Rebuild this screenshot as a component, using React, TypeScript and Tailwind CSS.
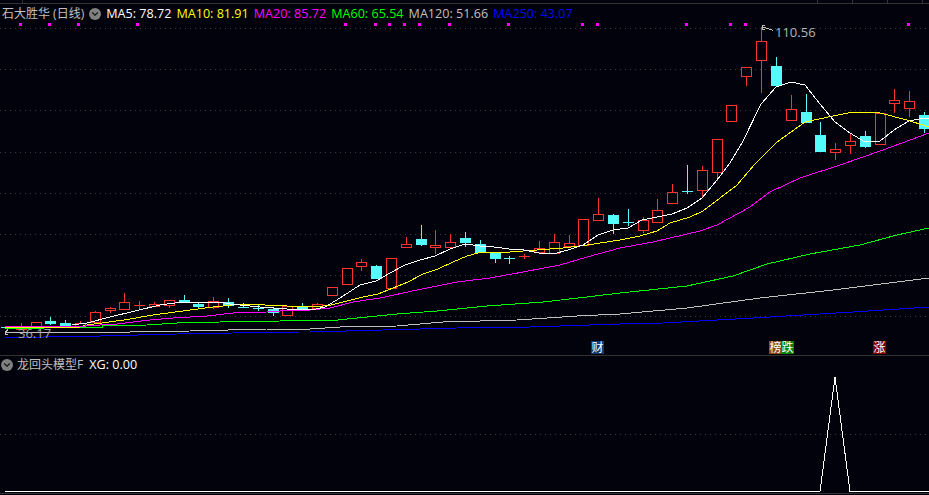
import { ChevronDown } from "lucide-react";

const FONT = "font-['Open_Sans','Noto_Sans_CJK_SC',sans-serif]";

// high, body top, body bottom, low, rising?
const CANDLES: [number, number, number, number, boolean][] = [
  [327, 327, 327, 327, false],
  [323, 326, 329, 329, true],
  [322, 322, 326, 326, true],
  [317, 321, 323, 325, false],
  [320, 323, 325, 325, false],
  [321, 323, 327, 327, true],
  [311, 312, 322, 322, true],
  [307, 308, 310, 313, true],
  [293, 302, 309, 309, true],
  [301, 305, 305, 309, true],
  [302, 304, 306, 306, true],
  [300, 300, 305, 308, true],
  [295, 300, 301, 303, false],
  [302, 304, 306, 309, false],
  [297, 301, 307, 309, true],
  [298, 302, 305, 308, false],
  [303, 307, 307, 308, false],
  [305, 308, 308, 311, false],
  [307, 309, 312, 316, false],
  [306, 306, 315, 315, true],
  [303, 307, 308, 308, false],
  [303, 304, 308, 308, true],
  [287, 287, 295, 295, true],
  [268, 268, 284, 284, true],
  [259, 262, 266, 271, true],
  [265, 266, 278, 278, false],
  [258, 258, 288, 288, true],
  [237, 244, 247, 247, true],
  [225, 239, 244, 246, false],
  [230, 245, 247, 254, true],
  [234, 242, 247, 248, true],
  [232, 238, 242, 247, false],
  [240, 244, 252, 252, false],
  [253, 253, 258, 263, false],
  [256, 258, 258, 264, false],
  [254, 256, 256, 259, true],
  [241, 248, 252, 254, true],
  [234, 242, 253, 253, true],
  [235, 243, 246, 247, true],
  [219, 219, 245, 245, true],
  [198, 214, 220, 221, true],
  [214, 215, 223, 234, false],
  [209, 222, 222, 226, false],
  [217, 220, 230, 233, true],
  [199, 210, 222, 222, true],
  [184, 192, 203, 204, true],
  [165, 191, 191, 194, false],
  [166, 170, 190, 197, true],
  [139, 139, 172, 181, true],
  [105, 105, 121, 122, true],
  [67, 67, 76, 86, true],
  [27, 41, 60, 93, true],
  [57, 66, 85, 85, false],
  [95, 109, 120, 120, true],
  [94, 112, 122, 122, false],
  [122, 135, 151, 151, false],
  [143, 149, 152, 160, true],
  [133, 141, 145, 154, true],
  [131, 136, 146, 148, false],
  [113, 113, 144, 144, true],
  [89, 100, 103, 113, true],
  [91, 101, 108, 117, true],
  [112, 115, 128, 133, false],
];

const MA5 = "72,325 87,323 110,317 135,311 160,305 175,303 190,302 220,302 230,304 260,307 287,309 316,309 325,307 340,298 360,285 376,281 390,273 405,265 420,260 435,256 450,249 465,244 480,246 494,247 509,249 524,250 539,253 553,254 568,250 583,245 598,235 613,230 628,228 642,220 657,217 672,214 687,208 702,198 717,180 730,163 742,143 761,104 776,87 791,82 805,85 820,104 835,122 850,133 865,142 880,141 894,130 909,121 924,118 929,119";
const MA10 = "5,327 80,327 87,325 109,322 124,320 153,315 183,311 213,307 242,304 287,306 316,307 331,305 343,302 363,297 378,294 393,288 408,282 423,274 438,269 453,262 467,256 478,253 510,252 537,250 563,248 587,245 620,240 640,236 657,231 670,223 690,217 703,211 720,198 737,185 754,165 777,142 805,122 833,116 853,112 880,113 907,120 929,127";
const MA20 = "5,326 85,326 100,325 117,324 133,322 150,320 173,318 207,316 233,313 267,312 293,310 310,310 330,308 353,302 380,298 417,290 457,282 490,278 523,272 560,265 587,257 620,248 653,242 700,231 717,225 750,207 770,192 800,178 840,165 883,150 929,133";
const MA60 = "5,328 43,328 43,327 102,327 102,326 147,325 177,323 220,322 280,321 310,320 338,320 357,318 397,314 437,311 487,306 543,302 587,297 620,293 687,286 733,276 767,264 810,254 860,245 897,235 929,228";
const MA120 = "5,332 130,332 130,332 190,331 267,329 310,329 340,327 397,326 443,322 517,320 577,316 620,314 687,308 760,298 833,290 929,278";
const MA250 = "5,337 43,337 43,336 100,336 177,334 233,333 300,332 310,332 383,330 457,328 530,327 620,324 663,323 753,318 853,312 929,307";

const MARKS = [20, 49, 78, 137, 345, 375, 389, 404, 419, 449, 508, 582, 597, 686, 730, 745, 908];
const GRID = [28, 69, 110, 152, 193, 234, 275, 316];
const BADGES = [
  { x: 591, text: "财", fill: "#0a3a6e" },
  { x: 769, text: "榜", fill: "#8a4a10" },
  { x: 781, text: "跌", fill: "#008000" },
  { x: 873, text: "涨", fill: "#800000" },
];
const RED = "#ff3232";
const CYAN = "#54fcfc";

function Candle({ index, data }: { index: number; data: (typeof CANDLES)[number] }) {
  const [high, top, bottom, low, up] = data;
  const c = Math.round(6 + index * 14.806);
  const color = up ? RED : CYAN;
  const mid = c + 0.5;
  return (
    <g>
      {high < top && <line x1={mid} x2={mid} y1={high} y2={top} stroke={color} />}
      {low > bottom && <line x1={mid} x2={mid} y1={bottom} y2={low} stroke={color} />}
      {top === bottom ? (
        <rect x={c - 5} y={top} width={11} height={1} fill={color} />
      ) : up ? (
        <rect x={c - 4.5} y={top + 0.5} width={10} height={bottom - top} fill="none" stroke={color} />
      ) : (
        <rect x={c - 5} y={top} width={11} height={bottom - top + 1} fill={color} />
      )}
    </g>
  );
}

function DownButton() {
  return (
    <span className="flex h-[12px] w-[12px] shrink-0 items-center justify-center rounded-full bg-[#808080]">
      <ChevronDown size={10} strokeWidth={3} color="#1c1c1c" />
    </span>
  );
}

export default function App() {
  return (
    <div className={`flex h-[495px] w-[929px] flex-col overflow-hidden bg-[#02020c] ${FONT}`}>
      {/* top strip with the ruler ticks */}
      <div className="flex h-[4px] shrink-0 border-b border-[#333333] pl-[22px]">
        <span className="w-px bg-[#333333]" />
        <div className="ml-[794px] flex gap-[34px]">
          <span className="w-px bg-[#333333]" />
          <span className="w-px bg-[#333333]" />
          <span className="w-px bg-[#333333]" />
          <span className="w-px bg-[#333333]" />
        </div>
      </div>

      {/* price panel */}
      <div className="relative h-[352px] shrink-0 border-b border-[#333333]">
        <svg className="block" width={929} height={351} viewBox="0 4 929 351" shapeRendering="crispEdges">
          {GRID.map((y) => (
            <line key={y} x1={0} x2={929} y1={y + 0.5} y2={y + 0.5} stroke="#3a3a3a" strokeDasharray="1 4" />
          ))}
          {MARKS.map((x) => (
            <rect key={x} x={x - 1} y={23} width={3} height={3} fill="#ff00ff" />
          ))}
          {CANDLES.map((d, i) => (
            <Candle key={i} index={i} data={d} />
          ))}
          <g fill="none">
            <polyline points={MA250} stroke="#0000ff" />
            <polyline points={MA120} stroke="#c0c0c0" />
            <polyline points={MA60} stroke="#00ff00" />
            <polyline points={MA10} stroke="#ffff00" />
            <polyline points={MA20} stroke="#ff00ff" />
            <polyline points={MA5} stroke="#ffffff" />
          </g>
          <path d="M765 25.5H762.5V29.5H765M763 27.5H765L773 30.5" fill="none" stroke="#c0c0c0" />
          <path d="M8 329.5L5.5 332V334.5H8" fill="none" stroke="#c0c0c0" />
          <text x={775} y={37} fontSize={13} fill="#b4b4b4">110.56</text>
          <text x={18} y={338} fontSize={13} fill="#a8a8a8">36.17</text>
          {BADGES.map((b) => (
            <g key={b.x}>
              <rect x={b.x} y={341} width={13} height={13} fill={b.fill} />
              <text x={b.x + 0.5} y={352} fontSize={12} fill="#ffffff">{b.text}</text>
            </g>
          ))}
        </svg>

        <div className="absolute left-[2px] top-[1px] flex h-[18px] items-center gap-[5px] whitespace-nowrap text-[12.6px] leading-none">
          <span className="text-[12px] text-[#c0c0c0]">石大胜华 (日线)</span>
          <DownButton />
          <span className="text-white">MA5: 78.72</span>
          <span className="text-[#ffff00]">MA10: 81.91</span>
          <span className="text-[#ff00ff]">MA20: 85.72</span>
          <span className="text-[#00ff00]">MA60: 65.54</span>
          <span className="text-[#c0c0c0]">MA120: 51.66</span>
          <span className="text-[#0000ff]">MA250: 43.07</span>
        </div>
      </div>

      {/* indicator panel */}
      <div className="relative flex-1">
        <svg className="block" width={929} height={139} viewBox="0 356 929 139" shapeRendering="crispEdges">
          <line x1={0} x2={929} y1={434.5} y2={434.5} stroke="#3a3a3a" strokeDasharray="1 4" />
          <polyline points="5,491.5 820,491.5 835,377 850,491.5 929,491.5" fill="none" stroke="#ffffff" />
          <line x1={0} x2={929} y1={493.5} y2={493.5} stroke="#333333" />
        </svg>
        <div className="absolute left-[1px] top-[1px] flex h-[16px] items-center gap-[4px] whitespace-nowrap text-[12.6px] leading-none">
          <DownButton />
          <span className="mr-[2px] text-[12px] text-[#c0c0c0]">龙回头模型F</span>
          <span className="text-white">XG: 0.00</span>
        </div>
      </div>
    </div>
  );
}
